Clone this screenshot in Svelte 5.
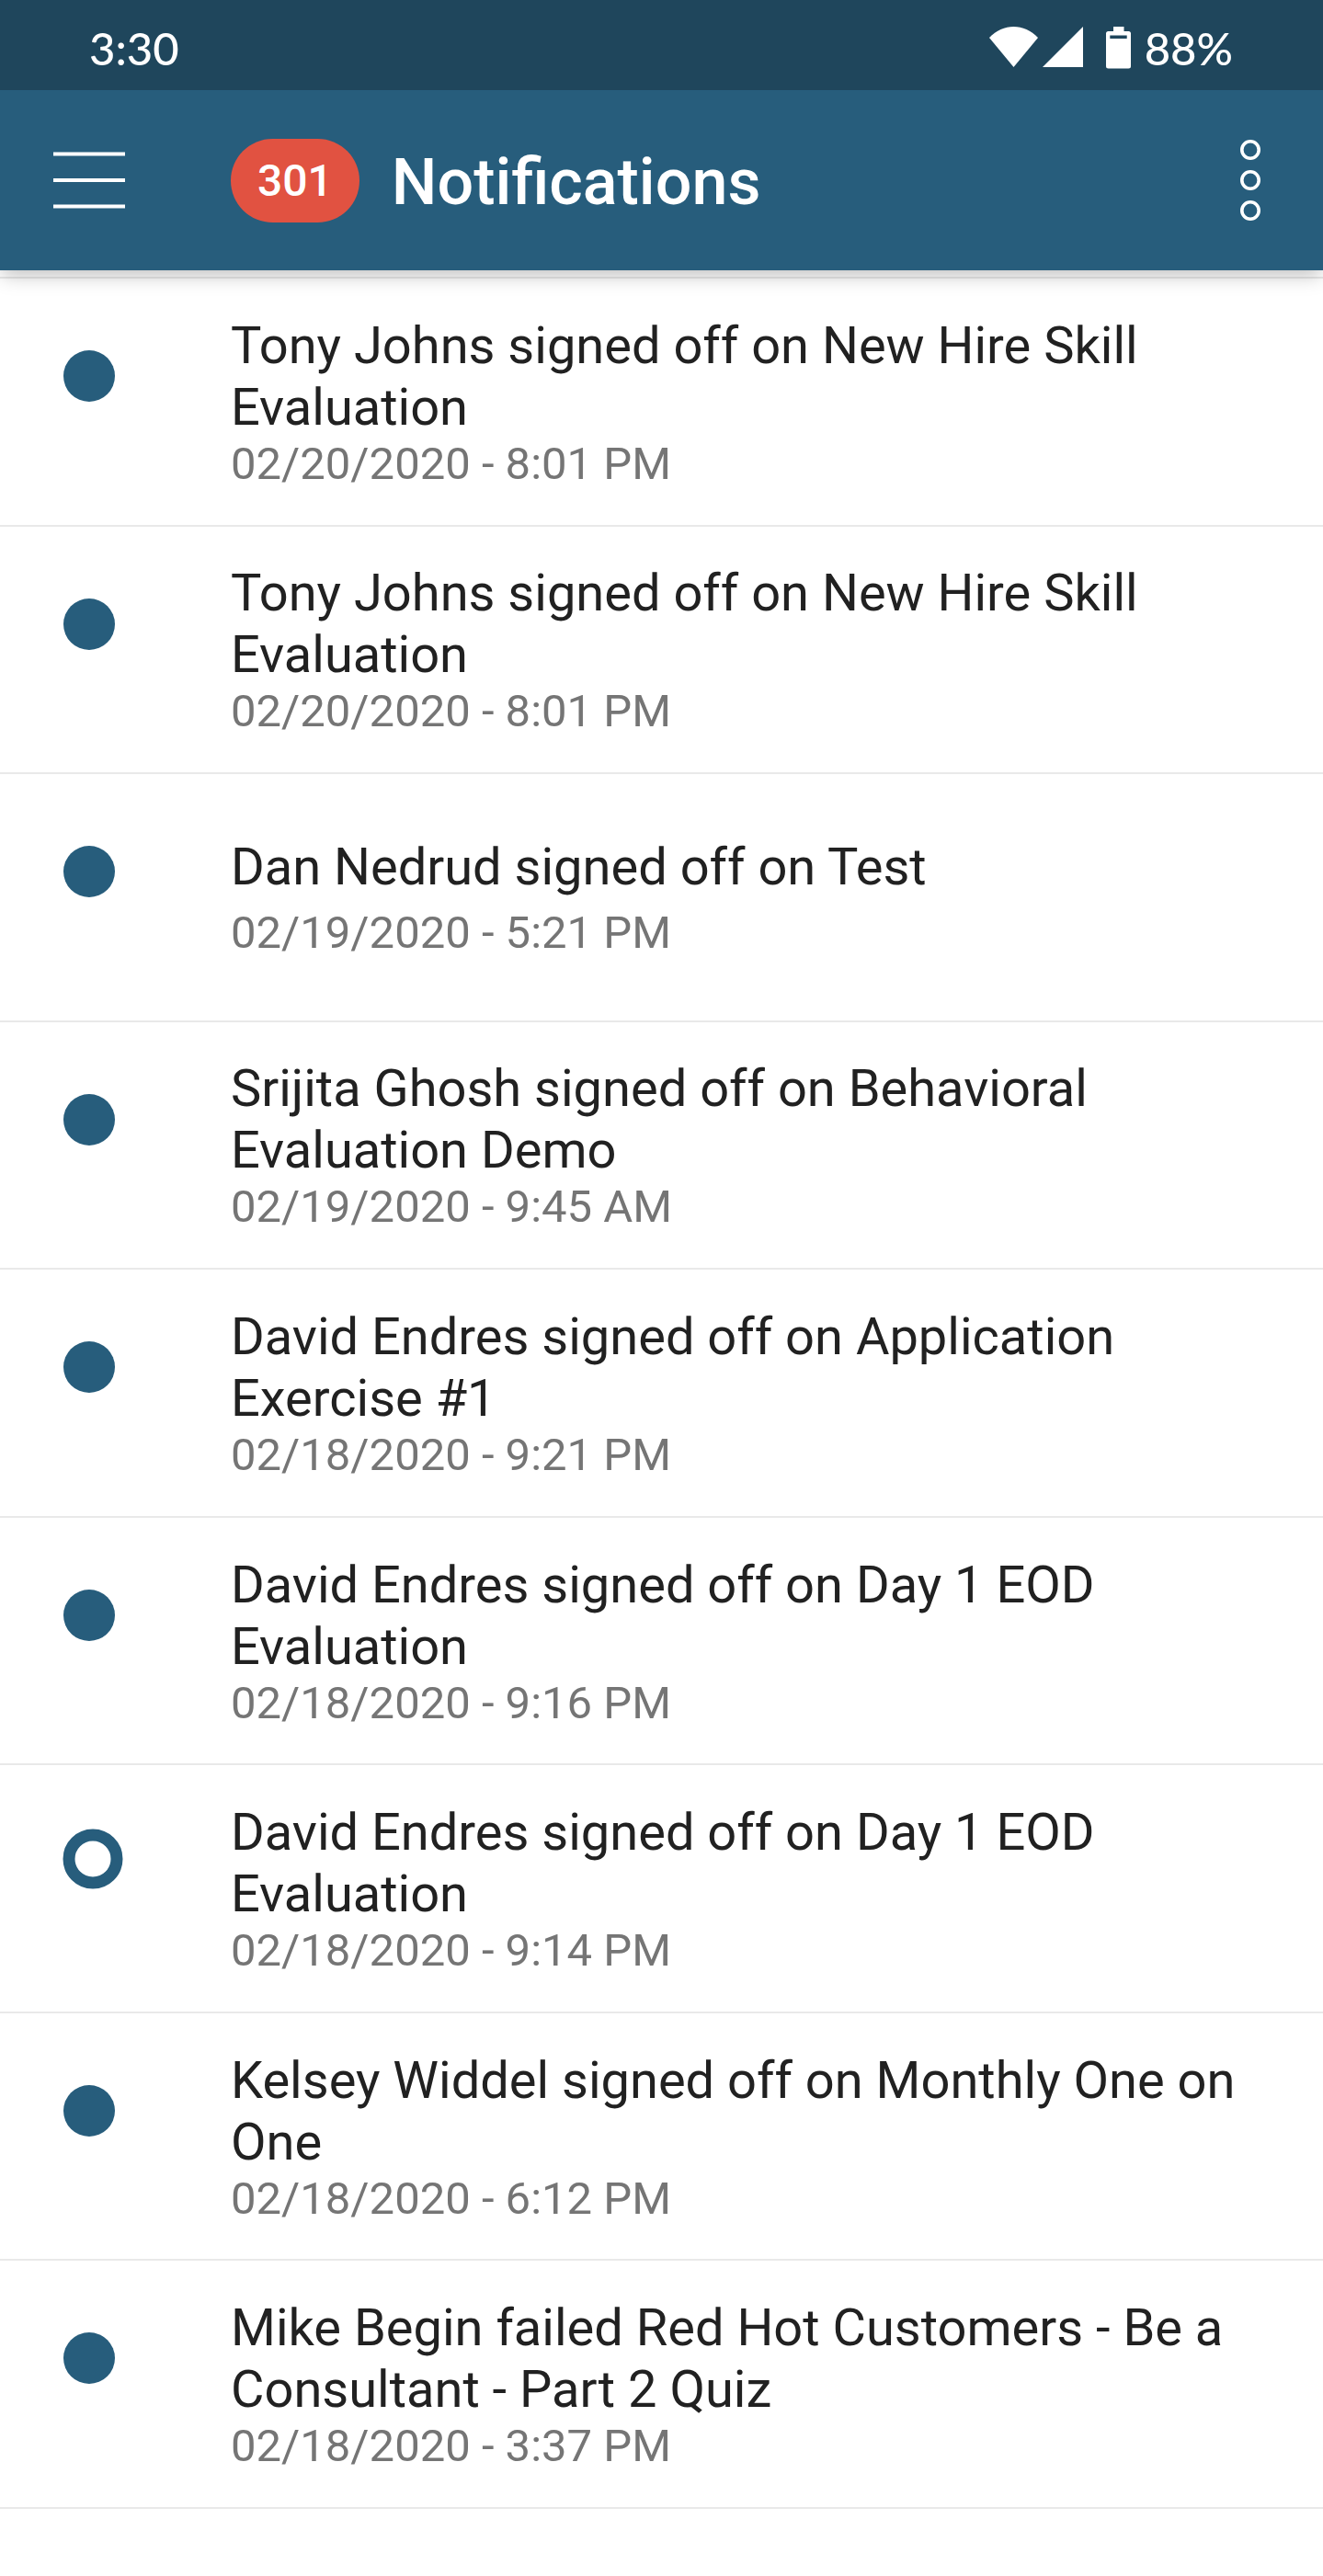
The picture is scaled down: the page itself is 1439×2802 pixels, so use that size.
<script>
  let unread = 301;

  let notifications = [
    { title: 'Tony Johns signed off on New Hire Skill Evaluation', date: '02/20/2020 - 8:01 PM', read: false },
    { title: 'Tony Johns signed off on New Hire Skill Evaluation', date: '02/20/2020 - 8:01 PM', read: false },
    { title: 'Dan Nedrud signed off on Test', date: '02/19/2020 - 5:21 PM', read: false },
    { title: 'Srijita Ghosh signed off on Behavioral Evaluation Demo', date: '02/19/2020 - 9:45 AM', read: false },
    { title: 'David Endres signed off on Application Exercise #1', date: '02/18/2020 - 9:21 PM', read: false },
    { title: 'David Endres signed off on Day 1 EOD Evaluation', date: '02/18/2020 - 9:16 PM', read: false },
    { title: 'David Endres signed off on Day 1 EOD Evaluation', date: '02/18/2020 - 9:14 PM', read: true },
    { title: 'Kelsey Widdel signed off on Monthly One on One', date: '02/18/2020 - 6:12 PM', read: false },
    { title: 'Mike Begin failed Red Hot Customers - Be a Consultant - Part 2 Quiz', date: '02/18/2020 - 3:37 PM', read: false },
  ];
</script>

<div class="screen">
  <div class="status-bar">
    <span>3:30</span>
    <div class="status-icons">
      <svg class="wifi" width="53" height="44" viewBox="0 0 53 44">
        <path d="M0 12C15-4 38-4 53 12L26.500 44z" />
      </svg>
      <svg class="signal" width="44" height="44" viewBox="0 0 44 44">
        <path d="M44 0v44H0z" />
      </svg>
      <svg class="battery" width="27" height="46" viewBox="0 0 27 46">
        <path fill-rule="evenodd" d="M8 0h11.500v5H24.500a2.500 2.500 0 0 1 2.500 2.500v35.500a2.500 2.500 0 0 1-2.500 2.500h-22a2.500 2.500 0 0 1-2.500-2.500V7.500a2.500 2.500 0 0 1 2.500-2.500H8zM4.300 9.500v3.500h18.400v-3.500z" />
      </svg>
      <span>88%</span>
    </div>
  </div>

  <header class="app-bar">
    <button class="menu" aria-label="Open menu">
      <svg width="78" height="64" viewBox="0 0 78 64">
        <path d="M0 3.500h78M0 32h78M0 60.500h78" stroke="#fff" stroke-width="4.200" />
      </svg>
    </button>
    <span class="badge">{unread}</span>
    <h1>Notifications</h1>
    <button class="more" aria-label="More options">
      <svg width="22" height="88" viewBox="0 0 22 88" fill="none" stroke="#fff" stroke-width="3.600">
        <circle cx="11" cy="11" r="9.200" />
        <circle cx="11" cy="44" r="9.200" />
        <circle cx="11" cy="77" r="9.200" />
      </svg>
    </button>
  </header>

  <main>
    <ul class="list">
      {#each notifications as item}
        <li class="item">
          <svg class="marker" width="66" height="66" viewBox="0 0 66 66">
            {#if item.read}
              <circle cx="33" cy="33" r="26" fill="none" stroke="#275d7c" stroke-width="13" />
            {:else}
              <circle cx="29" cy="37" r="28" fill="#275d7c" />
            {/if}
          </svg>
          <div class="text">
            <p class="title">{item.title}</p>
            <p class="date">{item.date}</p>
          </div>
        </li>
      {/each}
    </ul>
  </main>
</div>

<style>
  :global(body) {
    margin: 0;
    background-color: #fff;
  }

  .screen {
    display: flex;
    flex-direction: column;
    min-height: 100vh;
    font-family: Roboto, sans-serif;
    color: #212121;
  }

  .status-bar {
    position: relative;
    z-index: 2;
    display: flex;
    align-items: center;
    justify-content: space-between;
    box-sizing: border-box;
    height: 98px;
    padding: 6px 98px 0 97px;
    background-color: #1f465c;
    color: #fff;
    font-family: Lato, sans-serif;
    font-size: 49px;
    font-weight: 500;
    line-height: 58px;
  }

  .status-icons {
    display: flex;
    align-items: center;
  }

  .status-icons svg {
    fill: #fff;
    margin-bottom: 3px;
  }

  .signal {
    margin-left: 5px;
  }

  .status-icons .battery {
    margin: 0 15px 0 25px;
  }

  .app-bar {
    position: relative;
    z-index: 1;
    display: flex;
    align-items: center;
    height: 196px;
    padding: 0 68px 0 58px;
    background-color: #275d7c;
    color: #fff;
    box-shadow: 0 7px 20px -2px rgba(0, 0, 0, 0.26);
  }

  .app-bar button {
    display: flex;
    padding: 0;
    border: none;
    background: none;
    cursor: pointer;
  }

  .badge {
    margin-left: 115px;
    padding: 0 29px;
    border-radius: 46px;
    background-color: #e15241;
    font-size: 48px;
    font-weight: 500;
    line-height: 91px;
  }

  h1 {
    flex: 1;
    margin: 0 0 0 35px;
    padding-top: 3px;
    font-size: 70px;
    font-weight: 500;
    line-height: 82px;
  }

  main {
    flex: 1;
    display: flex;
    flex-direction: column;
    padding: 7px 0 73px;
  }

  .list {
    flex: 1;
    display: grid;
    grid-auto-rows: 1fr;
    margin: 0;
    padding: 0;
    border-top: 2px solid #e9e9e9;
    list-style: none;
  }

  .item {
    display: flex;
    align-items: flex-start;
    padding: 0 68px;
    border-bottom: 2px solid #e9e9e9;
  }

  .marker {
    flex: none;
    margin: 69px 117px 0 0;
  }

  .text {
    flex: 1;
    align-self: center;
    padding-top: 2px;
  }

  .text p {
    margin: 0;
  }

  .title {
    min-height: 77px;
    font-size: 56px;
    line-height: 67px;
  }

  .text .date {
    color: #757575;
    font-size: 49px;
    line-height: 56px;
  }
</style>
